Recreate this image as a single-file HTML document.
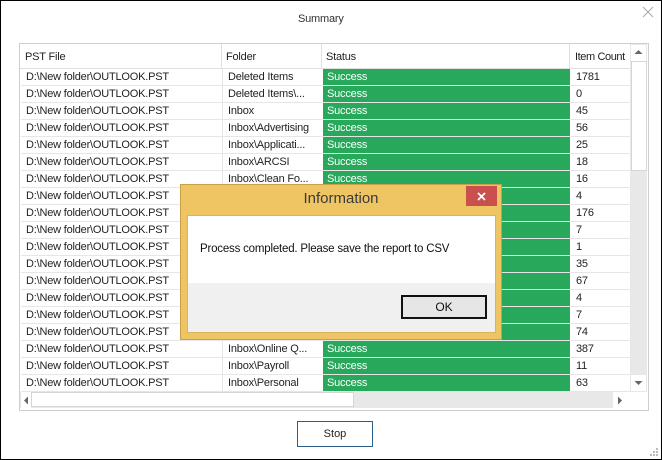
<!DOCTYPE html>
<html><head><style>
body{margin:0;width:662px;height:460px;overflow:hidden;font-family:"Liberation Sans","DejaVu Sans",sans-serif;}
.win{position:absolute;left:0;top:0;width:660px;height:458px;border:1px solid #000;background:#fff;}
.abs{position:absolute;}
.t{font-size:11px;color:#222;white-space:nowrap;letter-spacing:-0.2px;}
.row{position:absolute;left:20px;width:609px;height:17px;border-bottom:1px solid #e6e6e6;box-sizing:border-box;}
.c{position:absolute;top:0;height:16px;line-height:17px;font-size:11px;color:#222;white-space:nowrap;overflow:hidden;letter-spacing:-0.2px;}
.g{background:#27a85b;color:#fff;}
</style></head><body>
<div class="win">
<div class="abs t" style="left:297px;top:12px;color:#333;">Summary</div>
<svg class="abs" style="left:641px;top:5px" width="12" height="12"><path d="M1 1L11 11M11 1L1 11" stroke="#aaa" stroke-width="1"/></svg>
<div class="abs" style="left:18px;top:42px;width:628px;height:366px;border:1px solid #cfcfcf;"></div>
<div class="abs" style="left:19px;top:43px;width:611px;height:24px;border-bottom:1px solid #e0e0e0;background:#fff;"></div>
<div class="abs" style="left:220px;top:43px;width:1px;height:24px;background:#e0e0e0"></div>
<div class="abs" style="left:320px;top:43px;width:1px;height:24px;background:#e0e0e0"></div>
<div class="abs" style="left:568px;top:43px;width:1px;height:24px;background:#e0e0e0"></div>
<div class="abs t" style="left:24px;top:50px">PST File</div>
<div class="abs t" style="left:225px;top:50px">Folder</div>
<div class="abs t" style="left:325px;top:50px">Status</div>
<div class="abs t" style="left:574px;top:50px;letter-spacing:-0.4px">Item Count</div>
<div id="rows"></div>
<div class="abs" style="left:629px;top:43px;width:17px;height:348px;background:#e8e8e8;"></div>
<div class="abs" style="left:630px;top:44px;width:15px;height:16px;background:#fff;"></div>
<div class="abs" style="left:630px;top:60px;width:14px;height:108px;background:#fff;border:1px solid #d6d6d6;"></div>
<svg class="abs" style="left:633px;top:48px" width="9" height="6"><path d="M0.5 5L4.5 1L8.5 5Z" fill="#666"/></svg>
<div class="abs" style="left:630px;top:374px;width:15px;height:16px;background:#fff;"></div>
<svg class="abs" style="left:633px;top:379px" width="9" height="6"><path d="M0.5 1L4.5 5L8.5 1Z" fill="#666"/></svg>
<div class="abs" style="left:19px;top:391px;width:610px;height:16px;background:#e8e8e8;"></div>
<div class="abs" style="left:20px;top:391px;width:10px;height:16px;background:#fff;"></div>
<div class="abs" style="left:30px;top:391px;width:323px;height:15px;background:#fff;border:1px solid #d6d6d6;box-sizing:border-box;"></div>
<div class="abs" style="left:612px;top:391px;width:17px;height:16px;background:#fff;"></div>
<svg class="abs" style="left:22px;top:395px" width="6" height="9"><path d="M5 0.5L1 4.5L5 8.5Z" fill="#666"/></svg>
<svg class="abs" style="left:616px;top:395px" width="6" height="9"><path d="M1 0.5L5 4.5L1 8.5Z" fill="#666"/></svg>
<div class="abs" style="left:629px;top:391px;width:17px;height:16px;background:#fff;"></div>
<div class="abs" style="left:296px;top:420px;width:74px;height:24px;border:1px solid #2a5f8a;background:#fff;text-align:center;line-height:24px;font-size:11px;color:#222;">Stop</div>
<svg class="abs" style="left:648px;top:446px" width="10" height="10"><g fill="#bbb"><rect x="7" y="1" width="2" height="2"/><rect x="4" y="4" width="2" height="2"/><rect x="7" y="4" width="2" height="2"/><rect x="1" y="7" width="2" height="2"/><rect x="4" y="7" width="2" height="2"/><rect x="7" y="7" width="2" height="2"/></g></svg>
<div class="abs" style="left:179px;top:183px;width:322px;height:156px;background:#efc563;border:1px solid #c8a04a;box-sizing:border-box;"></div>
<div class="abs" style="left:179px;top:189px;width:322px;text-align:center;font-size:15px;color:#3a3a3a;">Information</div>
<div class="abs" style="left:465px;top:185px;width:31px;height:20px;background:#c9504c;"></div>
<svg class="abs" style="left:476px;top:191px" width="9" height="9"><path d="M1 1L8 8M8 1L1 8" stroke="#fff" stroke-width="1.8"/></svg>
<div class="abs" style="left:186px;top:214px;width:309px;height:118px;background:#f0f0f0;border:1px solid #d8b55a;box-sizing:border-box;"></div>
<div class="abs" style="left:187px;top:215px;width:307px;height:67px;background:#fff;"></div>
<div class="abs" style="left:199px;top:242px;font-size:11.5px;color:#111;white-space:nowrap;letter-spacing:-0.2px">Process completed. Please save the report to CSV</div>
<div class="abs" style="left:400px;top:294px;width:86px;height:24px;border:2px solid #111;box-sizing:border-box;background:#e6e6e6;text-align:center;line-height:20px;font-size:12px;color:#111;">OK</div>
</div>
<script>
var f=["Deleted Items","Deleted Items\\...","Inbox","Inbox\\Advertising","Inbox\\Applicati...","Inbox\\ARCSI","Inbox\\Clean Fo...","","","","","","","","","","Inbox\\Online Q...","Inbox\\Payroll","Inbox\\Personal"];
var n=[1781,0,45,56,25,18,16,4,176,7,1,35,67,4,7,74,387,11,63];
var h="";
for(var i=0;i<19;i++){var y=68+17*i;
h+='<div class="row" style="top:'+y+'px"><div class="c" style="left:5px">D:\\New folder\\OUTLOOK.PST</div><div class="abs" style="left:201px;top:0;width:1px;height:17px;background:#e6e6e6"></div><div class="c" style="left:207px;width:92px">'+f[i]+'</div><div class="c g" style="left:302px;width:247px;padding-left:4px;box-sizing:border-box">Success</div><div class="c" style="left:555px">'+n[i]+'</div></div>';}
document.getElementById("rows").innerHTML=h;
</script>
</body></html>
